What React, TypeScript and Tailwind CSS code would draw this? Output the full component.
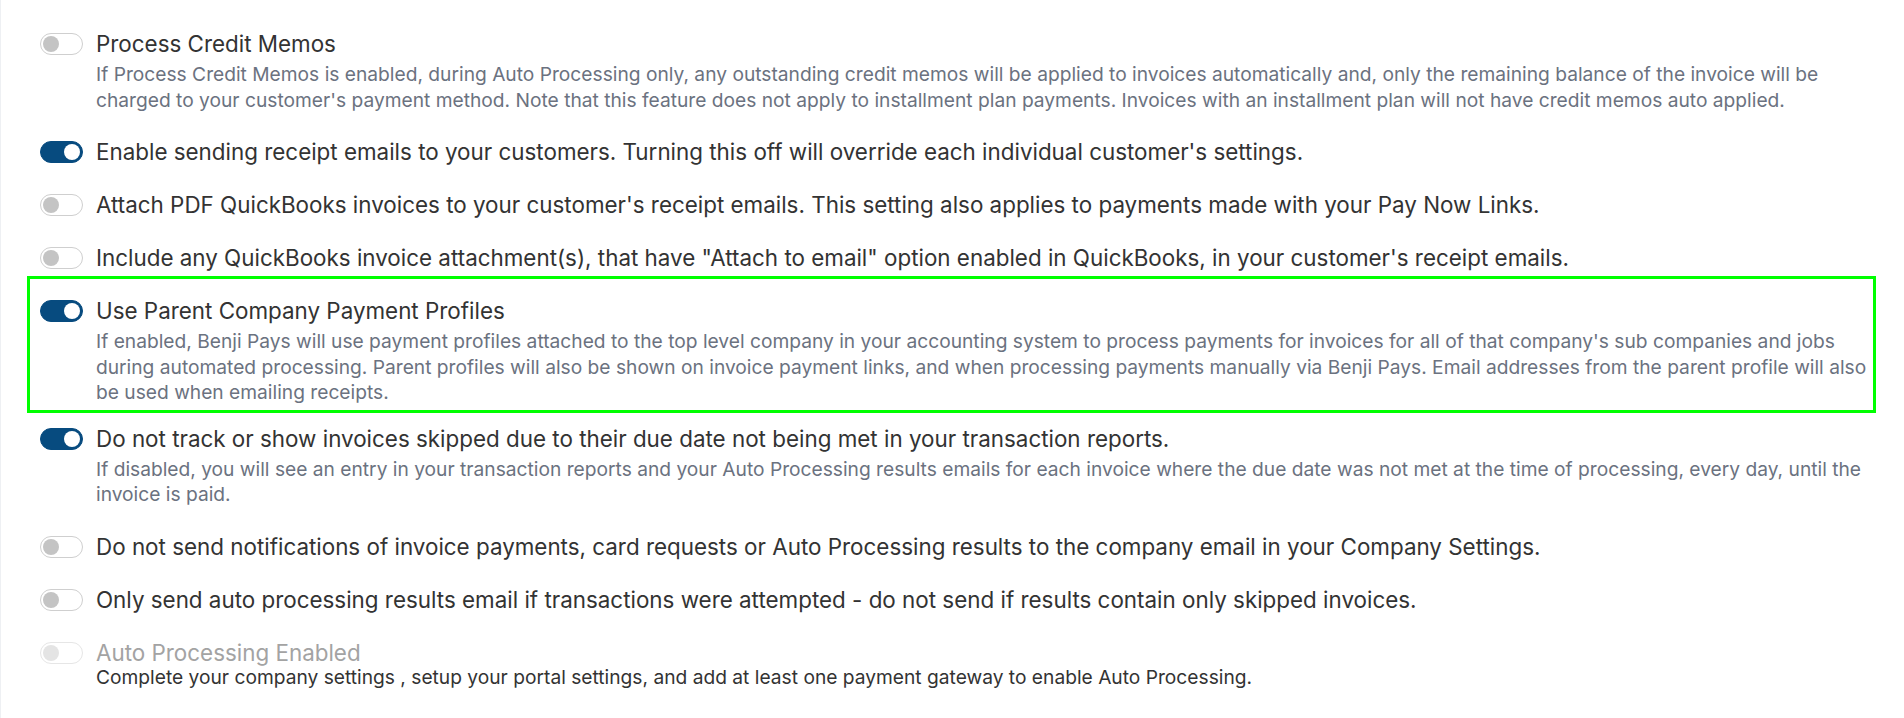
import { useState } from 'react';

type Setting = {
  id: string;
  title: string;
  description?: string;
  enabled: boolean;
  highlighted?: boolean;
};

const initialSettings: Setting[] = [
  {
    id: 'credit-memos',
    title: 'Process Credit Memos',
    description:
      "If Process Credit Memos is enabled, during Auto Processing only, any outstanding credit memos will be applied to invoices automatically and, only the remaining balance of the invoice will be charged to your customer's payment method. Note that this feature does not apply to installment plan payments. Invoices with an installment plan will not have credit memos auto applied.",
    enabled: false,
  },
  {
    id: 'receipt-emails',
    title:
      "Enable sending receipt emails to your customers. Turning this off will override each individual customer's settings.",
    enabled: true,
  },
  {
    id: 'attach-pdf',
    title:
      "Attach PDF QuickBooks invoices to your customer's receipt emails. This setting also applies to payments made with your Pay Now Links.",
    enabled: false,
  },
  {
    id: 'include-attachments',
    title:
      'Include any QuickBooks invoice attachment(s), that have "Attach to email" option enabled in QuickBooks, in your customer\'s receipt emails.',
    enabled: false,
  },
  {
    id: 'parent-profiles',
    title: 'Use Parent Company Payment Profiles',
    description:
      "If enabled, Benji Pays will use payment profiles attached to the top level company in your accounting system to process payments for invoices for all of that company's sub companies and jobs during automated processing. Parent profiles will also be shown on invoice payment links, and when processing payments manually via Benji Pays. Email addresses from the parent profile will also be used when emailing receipts.",
    enabled: true,
    highlighted: true,
  },
  {
    id: 'skipped-due-date',
    title:
      'Do not track or show invoices skipped due to their due date not being met in your transaction reports.',
    description:
      'If disabled, you will see an entry in your transaction reports and your Auto Processing results emails for each invoice where the due date was not met at the time of processing, every day, until the invoice is paid.',
    enabled: true,
  },
  {
    id: 'company-notifications',
    title:
      'Do not send notifications of invoice payments, card requests or Auto Processing results to the company email in your Company Settings.',
    enabled: false,
  },
  {
    id: 'results-email',
    title:
      'Only send auto processing results email if transactions were attempted - do not send if results contain only skipped invoices.',
    enabled: false,
  },
];

const Toggle = ({
  checked,
  disabled,
  onChange,
}: {
  checked: boolean;
  disabled?: boolean;
  onChange?: () => void;
}) => (
  <button
    type="button"
    role="switch"
    aria-checked={checked}
    disabled={disabled}
    onClick={onChange}
    className={`mt-[3px] flex h-[22px] w-[43px] shrink-0 items-center rounded-full border px-[2px] ${
      checked
        ? 'justify-end border-[#074b7f] bg-[#074b7f]'
        : disabled
          ? 'justify-start border-[#e6e6e6] bg-white'
          : 'justify-start border-[#cfcfcf] bg-white'
    }`}
  >
    <span
      className={`h-[16px] w-[16px] rounded-full ${
        checked ? 'bg-white' : disabled ? 'bg-[#e4e4e4]' : 'bg-[#c4c4c4]'
      }`}
    />
  </button>
);

const App = () => {
  const [settings, setSettings] = useState(initialSettings);

  const toggle = (id: string) =>
    setSettings((prev) => prev.map((s) => (s.id === id ? { ...s, enabled: !s.enabled } : s)));

  return (
    <div
      className="min-h-screen bg-white border-l border-[#eef0f3] pl-[39px] pr-[28px] pt-[30px] pb-[20px]"
      style={{ fontFamily: 'Inter, "Noto Sans", sans-serif' }}
    >
      <div className="flex flex-col gap-[25px]">
        {settings.map((s) => (
          <div
            key={s.id}
            className={
              s.highlighted
                ? '-ml-[13px] -mt-[21px] -mb-[13px] border-[3px] border-[#00ff00] pl-[10px] pt-[18px] pb-[4px]'
                : ''
            }
          >
            <div className="flex items-start gap-[13px]">
              <Toggle checked={s.enabled} onChange={() => toggle(s.id)} />
              <div className="min-w-0">
                <div className="text-[22.4px] leading-[28px] text-[#333333]">{s.title}</div>
                {s.description && (
                  <p className="mt-[4px] text-[19.2px] leading-[25.5px] text-[#6b7280]">{s.description}</p>
                )}
              </div>
            </div>
          </div>
        ))}

        <div className="flex items-start gap-[13px]">
          <Toggle checked={false} disabled />
          <div className="min-w-0">
            <div className="text-[22.4px] leading-[28px] text-[#a3a3a3]">Auto Processing Enabled</div>
            <p className="-mt-[2px] text-[19.2px] leading-[25.5px] text-[#333333]">
              Complete your company settings , setup your portal settings, and add at least one payment gateway
              to enable Auto Processing.
            </p>
          </div>
        </div>
      </div>
    </div>
  );
};

export default App;
